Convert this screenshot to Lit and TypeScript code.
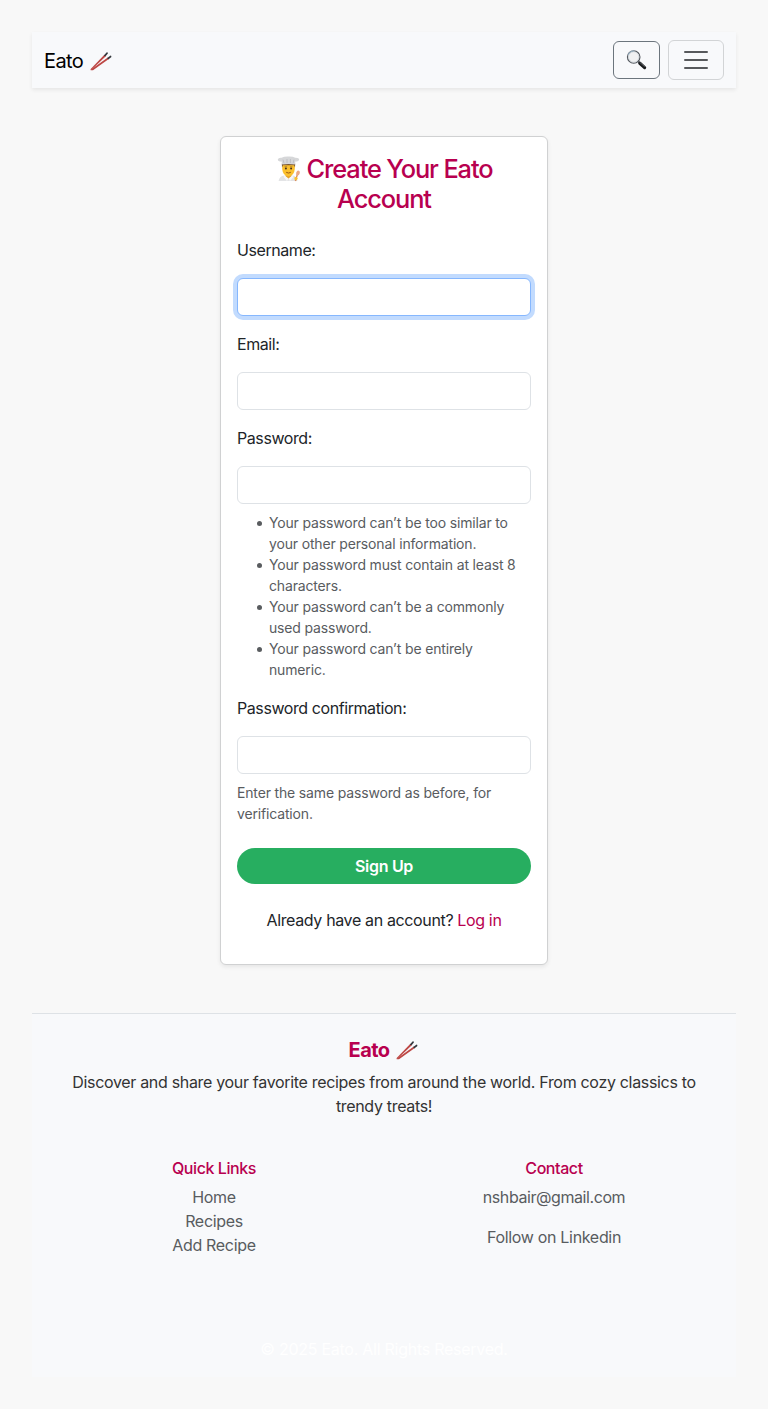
import { LitElement, html, css, svg } from "lit";
import { customElement } from "lit/decorators.js";

const chopsticks = html`<svg class="sticks" viewBox="0 0 24 20" aria-hidden="true">
  <path d="M1.2 18.4 L15.4 3.8 L16.8 5.2 L2.6 18.8Z" fill="#bd4744" />
  <path d="M14.8 4.4 L17.8 1.3 Q19 1.2 18.9 2.5 L16.3 5.6Z" fill="#33373c" />
  <path d="M2 18.5 L18.8 6.6 L19.8 8 L4 19.2 L1.6 19.3Z" fill="#bd4744" />
  <path d="M18.2 7 L21.6 4.6 Q22.8 4.8 22.2 6.2 L19.2 8.4Z" fill="#33373c" />
</svg>`;

const magnifier = html`<svg class="lens" viewBox="0 0 22 22" aria-hidden="true">
  <path d="M12.2 12.4 L14.2 14.4" stroke="#6d7277" stroke-width="2" />
  <path d="M13.8 14.2 L18.6 18.6" stroke="#17191b" stroke-width="3.2" stroke-linecap="round" />
  <path d="M13.6 13.2 L18.6 17.6" stroke="#777b80" stroke-width=".7" />
  <circle cx="7.7" cy="8" r="6.2" fill="#f0f1f2" stroke="#565b61" stroke-width="1.3" />
  <circle cx="7.7" cy="8" r="5.2" fill="none" stroke="#d3d8dc" stroke-width=".9" />
  <path d="M2.2 5.8 A6 6 0 0 1 8.4 2" fill="none" stroke="#9dbdd3" stroke-width=".9" />
</svg>`;

const cook = html`<svg class="cook" viewBox="0 0 26 26" aria-hidden="true">
  <path d="M2.6 25 Q3 20 8.6 19.4 L16.6 19.4 Q21 20 21.4 25Z" fill="#e3e4e6" />
  <path d="M9.6 17 H15.4 V20.4 L12.5 23 L9.6 20.4Z" fill="#e8a52c" />
  <path d="M8.6 19.4 L12.5 22.4 L11 25 L7.6 21Z M16.4 19.4 L12.5 22.4 L14 25 L17.4 21Z" fill="#f8f8f8" />
  <path d="M6.2 8 H18.8 V13 Q18.2 20 12.5 20.2 Q6.8 20 6.2 13Z" fill="#fbc02d" />
  <path d="M5.8 7.4 H19.2 L19 11.6 L18 9.2 H7 L6 11.6Z" fill="#7a5530" />
  <circle cx="9.9" cy="12.6" r="1" fill="#47301d" />
  <circle cx="15.1" cy="12.6" r="1" fill="#47301d" />
  <path d="M8.6 10.8 h2.5 M13.9 10.8 h2.5" stroke="#80571c" stroke-width=".6" />
  <path d="M10.2 16.3 Q12.5 17.8 14.8 16.3" stroke="#9c5a16" stroke-width="1" fill="none" />
  <path d="M6.2 8.6 L5.6 5.6 Q1.8 5.4 1.8 3.4 Q2.4 1.4 5.6 1.8 Q8 .5 12.2 .6 Q17 .4 19.2 1.7 Q23 1.5 23.2 3.2 Q23 5.4 19.4 5.6 L18.8 8.6 Q12.5 7.2 6.2 8.6Z" fill="#d6d7d9" />
  <path d="M7 3.6 L8 7.2 M11 3 V7 M14.4 3 V7 M18 3.6 L17.2 7.2" stroke="#b4b6ba" stroke-width=".7" />
  <path d="M21.4 18.4 L19.4 25" stroke="#d98b5f" stroke-width="1.4" />
  <ellipse cx="22" cy="17" rx="1.8" ry="2.5" transform="rotate(20 22 17)" fill="#eba985" />
  <path d="M18.4 21.4 Q20.4 20.4 21.8 22.2 L20.8 24.2 L18.6 23.8Z" fill="#fbc02d" />
</svg>`;

const bars = svg`<path d="M4 7h22M4 15h22M4 23h22" stroke="#57595c" stroke-width="2" stroke-linecap="round" stroke-miterlimit="10" />`;

@customElement("app-root")
export class AppRoot extends LitElement {
  static styles = css`
    :host {
      display: block;
      box-sizing: border-box;
      min-height: 1409px;
      padding: 32px;
      background: #f8f8f8;
      color: #212529;
      font: 400 16px/24px Inter, "Liberation Sans", sans-serif;
      letter-spacing: -0.32px;
    }
    * { box-sizing: border-box; }
    h2, h5, h6, p, ul { margin: 0; }
    a { color: inherit; text-decoration: none; }
    .nav {
      display: flex;
      align-items: center;
      height: 56px;
      padding: 0 12px;
      gap: 8px;
      background: #f8f9fb;
      box-shadow: 0 2px 4px rgba(0, 0, 0, 0.075);
    }
    .brand {
      display: flex;
      align-items: center;
      margin-right: auto;
      padding-top: 2px;
      color: #000;
      font-size: 20px;
      line-height: 30px;
      letter-spacing: -0.6px;
    }
    .sticks { width: 24px; height: 20px; margin-left: 6px; flex: none; }
    .search, .toggle {
      display: flex;
      align-items: center;
      justify-content: center;
      padding: 0;
      border-radius: 6px;
      background: transparent;
    }
    .search { width: 47px; height: 38px; border: 1px solid #6c757d; }
    .toggle { width: 56px; height: 40px; border: 1px solid #d2d4d6; }
    .lens { width: 22px; height: 22px; }
    .toggle svg { width: 30px; height: 30px; }
    .card {
      width: 328px;
      height: 829px;
      margin: 48px auto;
      padding: 17px 16px 16px;
      border: 1px solid #d0d1d2;
      border-radius: 6px;
      background: #fff;
      box-shadow: 0 2px 4px rgba(0, 0, 0, 0.075);
    }
    .title {
      margin-bottom: 24px;
      color: #b8004f;
      font-size: 25.4px;
      line-height: 30px;
      font-weight: 550;
      letter-spacing: -1.12px;
      text-align: center;
    }
    .cook { width: 26px; height: 26px; vertical-align: -4px; margin-right: 5px; }
    .field { margin-bottom: 16px; }
    .field label { display: block; margin-bottom: 16px; letter-spacing: -0.42px; }
    .field input {
      display: block;
      width: 100%;
      height: 38px;
      padding: 6px 12px;
      border: 1px solid #dee2e6;
      border-radius: 6px;
      background: #fff;
      outline: 0;
      font: inherit;
    }
    .field .active { border-color: #86b7fe; box-shadow: 0 0 0 4px #c2dbfe; }
    .help {
      margin-top: 8px;
      color: #595c5f;
      font-size: 14px;
      line-height: 21px;
      letter-spacing: -0.16px;
    }
    .rules { padding-left: 32px; list-style: none; }
    .rules li::before {
      content: "";
      float: left;
      width: 5px;
      height: 5px;
      margin: 9px 0 0 -12px;
      border-radius: 50%;
      background: #595c5f;
    }
    .submit {
      display: block;
      width: 100%;
      height: 36px;
      margin: 24px 0;
      border: 0;
      border-radius: 18px;
      background: #27ae60;
      color: #fff;
      font: inherit;
      font-weight: 600;
      letter-spacing: -0.3px;
    }
    .login { text-align: center; letter-spacing: -0.36px; }
    .login a { color: #b8004f; }
    .footer {
      height: 364px;
      padding: 24px 12px 16px;
      border-top: 1px solid #dee2e6;
      background: #f8f9fb;
      text-align: center;
    }
    .name {
      display: flex;
      justify-content: center;
      align-items: center;
      margin-bottom: 8px;
      color: #b8004f;
      font-size: 20px;
      line-height: 24px;
      font-weight: 700;
      letter-spacing: -0.6px;
    }
    .about { padding: 0 24px; color: #333; }
    .columns {
      display: grid;
      grid-template-columns: 1fr 1fr;
      height: 179px;
      margin-top: 40px;
      color: #595c5f;
    }
    .heading {
      margin-bottom: 7px;
      padding-top: 1px;
      color: #b8004f;
      font-size: 16px;
      line-height: 19px;
      font-weight: 550;
      letter-spacing: -0.42px;
    }
    .links { padding: 0; list-style: none; }
    .mail { margin-bottom: 16px; letter-spacing: -0.42px; }
    .copy { color: #fff; letter-spacing: -0.26px; }
  `;

  render() {
    return html`
      <nav class="nav">
        <a class="brand">Eato ${chopsticks}</a>
        <button class="search" aria-label="Search">${magnifier}</button>
        <button class="toggle" aria-label="Menu"><svg viewBox="0 0 30 30" fill="none">${bars}</svg></button>
      </nav>
      <main class="card">
        <h2 class="title">${cook}Create Your Eato<br />Account</h2>
        <div class="field"><label>Username:</label><input class="active" /></div>
        <div class="field"><label>Email:</label><input type="email" /></div>
        <div class="field">
          <label>Password:</label><input type="password" />
          <ul class="help rules">
            <li>Your password can’t be too similar to<br />your other personal information.</li>
            <li>Your password must contain at least 8<br />characters.</li>
            <li>Your password can’t be a commonly<br />used password.</li>
            <li>Your password can’t be entirely<br />numeric.</li>
          </ul>
        </div>
        <div class="field">
          <label>Password confirmation:</label><input type="password" />
          <p class="help">Enter the same password as before, for<br />verification.</p>
        </div>
        <button class="submit">Sign Up</button>
        <p class="login">Already have an account? <a>Log in</a></p>
      </main>
      <footer class="footer">
        <h5 class="name">Eato ${chopsticks}</h5>
        <p class="about">Discover and share your favorite recipes from around the world. From cozy classics to<br />trendy treats!</p>
        <div class="columns">
          <section>
            <h6 class="heading">Quick Links</h6>
            <ul class="links"><li>Home</li><li>Recipes</li><li>Add Recipe</li></ul>
          </section>
          <section>
            <h6 class="heading">Contact</h6>
            <p class="mail">nshbair@gmail.com</p>
            <p>Follow on Linkedin</p>
          </section>
        </div>
        <p class="copy">© 2025 Eato. All Rights Reserved.</p>
      </footer>
    `;
  }
}
